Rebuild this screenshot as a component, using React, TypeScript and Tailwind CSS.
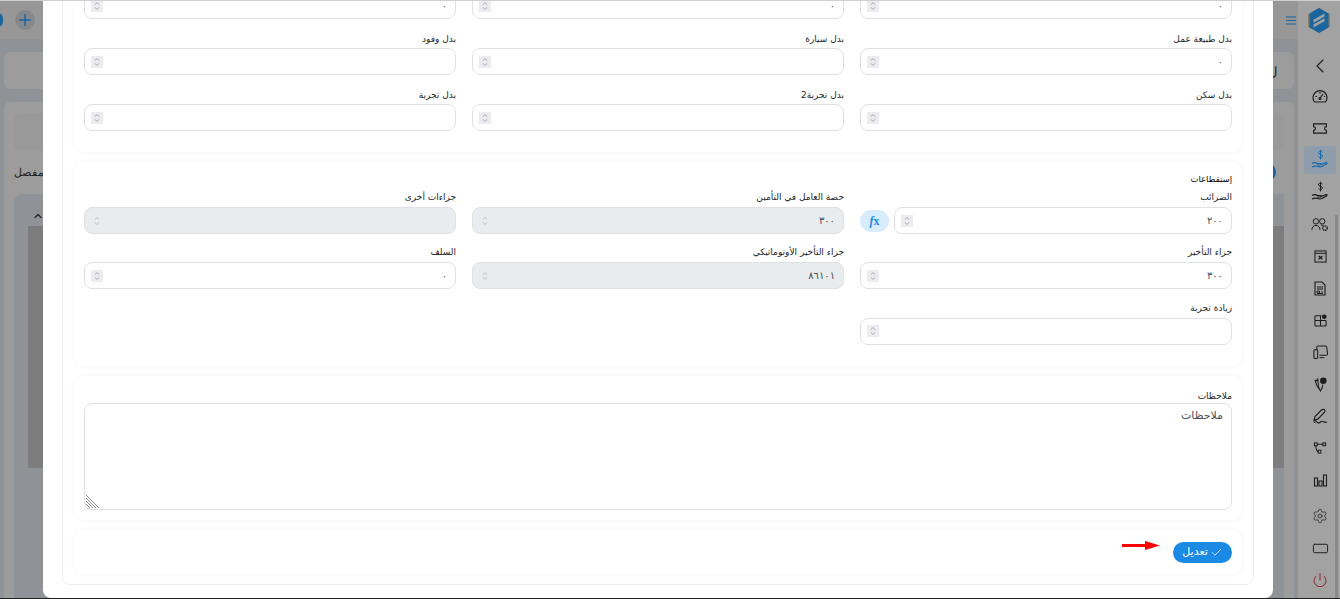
import { ChevronLeft, ChevronUp, Check, Plus, Power, Settings, RectangleHorizontal } from 'lucide-react'

type FieldProps = {
    label?: string
    value?: string
    disabled?: boolean
    formula?: boolean
}

const Arrows = () => (
    <svg viewBox="0 0 12 12" className="h-[12px] w-[12px]" fill="none" stroke="currentColor" strokeWidth="0.8">
        <path d="M3.800 4.600 6 2.600l2.200 2" />
        <path d="M3.800 7.400 6 9.400l2.200-2" />
    </svg>
)

const NumberBox = ({ value, disabled }: { value?: string; disabled?: boolean }) => (
    <div
        className={`flex h-[27px] flex-1 items-center justify-between rounded-[8px] border border-[#dee2e6] pr-[8px] pl-[6px] text-[10px] text-[#495057] ${disabled ? 'bg-[#e9ecef]' : 'bg-white'}`}
    >
        <span>{value}</span>
        <div className={disabled ? 'text-[#adb5bd]' : 'bg-[#ebebf0] text-[#9a9aa0]'}>
            <Arrows />
        </div>
    </div>
)

const Field = ({ label, value, disabled, formula }: FieldProps) => (
    <div className="flex flex-col">
        {label && <label className="mb-[2px] h-[13px] text-[9px] leading-[13px] text-[#212529]">{label}</label>}
        <div className="flex items-center gap-[5px]">
            <NumberBox value={value} disabled={disabled} />
            {formula && (
                <button
                    dir="ltr"
                    className="flex h-[22px] w-[29px] items-center justify-center rounded-full bg-[#d6ebfc] font-['Liberation_Serif',serif] text-[12px] font-bold text-[#1a8ae5]"
                >
                    <i>f</i>x
                </button>
            )}
        </div>
    </div>
)

const Card = ({ children, className }: { children: React.ReactNode; className?: string }) => (
    <div className={`rounded-[10px] bg-white shadow-[0_0_6px_rgba(0,0,0,0.04)] ${className ?? ''}`}>{children}</div>
)

const Dollar = ({ active }: { active?: boolean }) => (
    <svg
        viewBox="0 0 20 22"
        className={`h-[22px] w-[20px] ${active ? 'text-[#1b6aa8]' : 'text-[#1c1c1c]'}`}
        fill="none"
        stroke="currentColor"
        strokeWidth="1"
    >
        <path d="M12.500 3.200c-.5-.8-1.300-1.100-2-1.100-1.200 0-2 .6-2 1.600 0 2.200 4 1.200 4 3.300 0 1-.9 1.600-2 1.600-.8 0-1.600-.3-2-1M10.500.8v9.600" />
        <path d="M2 14.500c2-1.300 3.500-1.300 5.500 0h3c1 0 1 1.500 0 1.500H7" strokeWidth="1.200" />
        <path d="m11 15.500 5-1.800c1.200-.2 1.500.6.500 1.200L12 17.500c-1.500.6-3 .6-4.500 0-1.500-.6-3.500-.4-5.500.5" strokeWidth="1.200" />
    </svg>
)

const SideIcon = ({ children, active }: { children: React.ReactNode; active?: boolean }) => (
    <div
        className={`flex h-[28px] w-[32px] items-center justify-center rounded-[3px] text-[#1c1c1c] ${active ? 'bg-[#8f9cac]' : ''}`}
    >
        {children}
    </div>
)

const Sidebar = () => (
    <aside className="relative flex w-[42px] shrink-0 flex-col items-center bg-[#a2a2a2]">
        <div className="absolute top-[214px] right-[2px] bottom-0 w-[3px] bg-[#8a8a8a]" />
        <div className="flex h-[38px] w-full items-center justify-center">
            <svg viewBox="0 0 22 25" className="h-[25px] w-[22px]">
                <path d="M11 0 22 6.200v12.600L11 25 0 18.800V6.200z" fill="#8f7a60" />
                <path d="M11 0 20.500 5.500v14L11 25 1.500 19.500v-14z" fill="#1b659f" />
                <path d="M16.500 5.500 5.500 11.800v3l11-6.300zM5.500 16.500l11-6.300v3l-11 6.300z" fill="#a2a2a2" />
            </svg>
        </div>
        <div className="flex h-[52px] items-center justify-center pt-[2px] pl-[1px]">
            <ChevronLeft size={24} strokeWidth={1.100} className="text-[#1c1c1c]" />
        </div>
        <div className="-mt-[9px] flex flex-col items-center gap-[4px] pl-[2px]">
            <SideIcon>
                <svg viewBox="0 0 16 14" className="h-[14px] w-[16px]" fill="none" stroke="currentColor" strokeWidth="1.200">
                    <path d="M2.500 13a7 7 0 1 1 11 0z" />
                    <path d="m8 9 3-4M3.500 7.500h1.500M8 3v1.500M12 7.500h1" />
                    <circle cx="8" cy="9.500" r="1" />
                </svg>
            </SideIcon>
            <SideIcon>
                <svg viewBox="0 0 16 12" className="h-[11px] w-[16px]" fill="none" stroke="currentColor" strokeWidth="1.200">
                    <path d="M1 1h14v3a2 2 0 0 0 0 4v3H1V8a2 2 0 0 0 0-4z" />
                </svg>
            </SideIcon>
            <SideIcon active>
                <Dollar active />
            </SideIcon>
            <SideIcon>
                <Dollar />
            </SideIcon>
            <SideIcon>
                <svg viewBox="0 0 20 16" className="h-[15px] w-[18px]" fill="none" stroke="currentColor" strokeWidth="1.100">
                    <circle cx="5.500" cy="4.500" r="3" />
                    <circle cx="12.500" cy="4.500" r="3" />
                    <path d="M1 14c0-3 2-5 4.500-5S10 11 10 14M11 8.500c1 0 2 .2 2.500.8" />
                    <circle cx="15.500" cy="12" r="2.500" strokeDasharray="1.500 .6" strokeWidth="1.500" />
                </svg>
            </SideIcon>
            <SideIcon>
                <svg viewBox="0 0 14 14" className="h-[13px] w-[13px]" fill="none" stroke="currentColor" strokeWidth="1.100">
                    <rect x="1" y="1" width="12" height="12" />
                    <path d="M1 3.500h12" />
                    <path d="m5 6.500 4 3.500M9 6.500 5 10" strokeWidth="1.400" />
                </svg>
            </SideIcon>
            <SideIcon>
                <svg viewBox="0 0 12 15" className="h-[15px] w-[12px]" fill="none" stroke="currentColor" strokeWidth="1.100">
                    <path d="M1 1h7l3 3v10H1z" />
                    <path d="M3 6h6M3 8h6" />
                    <path d="M3 10h2.500v2H3zM7 11h2M3 12.500h6" strokeWidth="0.900" />
                </svg>
            </SideIcon>
            <SideIcon>
                <svg viewBox="0 0 14 14" className="h-[13px] w-[13px]" fill="none" stroke="currentColor" strokeWidth="1.100">
                    <path d="M8 2H2a1 1 0 0 0-1 1v9.500a.500.500 0 0 0 .500.500H12a1 1 0 0 0 1-1V7M7 2v11M1 7h12" />
                    <circle cx="11" cy="3" r="2.500" fill="currentColor" stroke="none" />
                </svg>
            </SideIcon>
            <SideIcon>
                <svg viewBox="0 0 16 16" className="h-[15px] w-[15px]" fill="none" stroke="currentColor" strokeWidth="1.100">
                    <path d="M4 5V2.500A1.500 1.500 0 0 1 5.500 1h7.500c1 0 1.500.5 1.700 1.500L15.500 9c.2 1-.5 2-1.500 2H7" />
                    <rect x="1" y="5" width="4" height="9.500" rx="1" />
                    <path d="M7 13.500h5" />
                </svg>
            </SideIcon>
            <SideIcon>
                <svg viewBox="0 0 14 16" className="h-[15px] w-[13px]" fill="none" stroke="currentColor" strokeWidth="1.100">
                    <path d="M1 3l2 1 1-2 1 9 2 4 2-4 .6-3M1 3l2 6 4 6" />
                    <circle cx="10" cy="4" r="3.500" fill="currentColor" stroke="none" />
                </svg>
            </SideIcon>
            <SideIcon>
                <svg viewBox="0 0 16 16" className="h-[16px] w-[16px]" fill="none" stroke="currentColor" strokeWidth="1.100">
                    <path d="M2 12.500 3 8.500 9.500 2c1-1 3.500-1 3.500 1 0 .6-.3 1-.7 1.500L6 11z" />
                    <path d="M2 12.500 6 11M2 14.500c1.500-1 2.500-1 3.500 0s2 .5 3-.5 2-1 3-.2 2 .7 3.500.2" />
                </svg>
            </SideIcon>
            <SideIcon>
                <svg viewBox="0 0 14 13" className="h-[12px] w-[14px]" fill="none" stroke="currentColor" strokeWidth="1.100">
                    <rect x="1" y="1" width="3" height="3" />
                    <rect x="10" y="1" width="3" height="3" />
                    <rect x="5" y="9" width="3" height="3" />
                    <path d="M4 2.500h6M2.500 4c0 3 1 5.500 2.500 6.500" />
                </svg>
            </SideIcon>
            <SideIcon>
                <svg viewBox="0 0 14 13" className="h-[13px] w-[15px]" fill="none" stroke="currentColor" strokeWidth="1.100">
                    <rect x="1" y="4" width="3" height="8" />
                    <rect x="5.500" y="7" width="3" height="5" />
                    <rect x="10" y="1" width="3" height="11" />
                </svg>
            </SideIcon>
            <div className="mt-[4px]">
                <SideIcon>
                    <Settings size={16} strokeWidth={1.100} />
                </SideIcon>
            </div>
            <SideIcon>
                <RectangleHorizontal size={17} strokeWidth={1.400} />
            </SideIcon>
            <SideIcon>
                <Power size={16} strokeWidth={1.400} className="text-[#8c2236]" />
            </SideIcon>
        </div>
    </aside>
)

// the dimmed page that sits under the modal
const BackPage = () => (
    <div className="flex min-w-0 flex-1 flex-col bg-[#8f9296]">
        <div className="flex h-[38px] shrink-0 items-center justify-between bg-[#979797] pr-[2px]">
            <div className="flex items-center gap-[12px]">
                <div className="-ml-[8px] h-[14px] w-[11px] rounded-full bg-[#1b659f]" />
                <div className="flex h-[20px] w-[20px] items-center justify-center rounded-full bg-[#85898e]">
                    <Plus size={18} strokeWidth={2} className="text-[#1b659f]" />
                </div>
            </div>
            <svg viewBox="0 0 10 9" className="h-[9px] w-[10px]" fill="none" stroke="#1b659f" strokeWidth="1">
                <path d="M0 1h10M0 4.500h10M0 8h10" />
            </svg>
        </div>
        <div className="mx-[4px] mt-[13px] flex h-[37px] shrink-0 items-center justify-end rounded-[6px] bg-[#9c9c9c] pt-[2px] pr-[17px] pl-[4px] text-[13px] text-[#222]">
            ل
        </div>
        <div className="mx-[4px] mt-[13px] flex flex-1 flex-col rounded-t-[6px] bg-[#9c9c9c] px-[10px] pt-[11px]">
            <div className="h-[37px] rounded-[6px] bg-[#999999]" />
            <div className="mt-[12px] flex h-[20px] items-center justify-between">
                <span dir="rtl" className="text-[11px] text-[#222]">
                    مفصل
                </span>
                <span className="mr-[8px] h-[20px] w-[24px] rounded-full bg-[#1b659f]" />
            </div>
            <div className="mt-[12px] flex-1 rounded-tl-[8px] bg-[#8f9296] pt-[16px] pl-[14px]">
                <ChevronUp size={12} strokeWidth={2.500} className="ml-[4px] text-[#222]" />
                <div className="mt-[4px] h-[242px] bg-[#7d7d7d]" />
            </div>
        </div>
    </div>
)

const Arrow = () => (
    <svg viewBox="0 0 38 9" className="h-[9px] w-[38px]">
        <path d="M0 3h23V0l15 4.500L23 9V6H0z" fill="#f00" />
    </svg>
)

const Modal = () => (
    <div
        dir="rtl"
        className="absolute top-0 bottom-0 left-[43px] flex w-[1230px] flex-col justify-end overflow-hidden rounded-b-[8px] bg-white px-[19px] pb-[13px] font-['DejaVu_Sans',sans-serif]"
    >
        <div className="flex shrink-0 flex-col gap-[10px] rounded-[8px] border border-[#eceef0] px-[11px] pt-[10px] pb-[10px]">
            <Card className="px-[10px] pt-[10px] pb-[21px]">
                <div className="grid grid-cols-3 gap-x-[16px] gap-y-[14px]">
                    <Field value="٠" />
                    <Field value="٠" />
                    <Field value="٠" />
                    <Field label="بدل طبيعة عمل" value="٠" />
                    <Field label="بدل سيارة" />
                    <Field label="بدل وفود" />
                    <Field label="بدل سكن" />
                    <Field label="بدل تجربة2" />
                    <Field label="بدل تجربة" />
                </div>
            </Card>
            <Card className="h-[204px] px-[10px] pt-[10px]">
                <h3 className="h-[14px] text-[8.500px] leading-[14px] text-black">إستقطاعات</h3>
                <div className="mt-[5px] grid grid-cols-3 gap-x-[16px] gap-y-[12.400px] [&_label]:mb-[3px]">
                    <Field label="الضرائب" value="٢٠٠" formula />
                    <Field label="حصة العامل في التأمين" value="٣٠٠" disabled />
                    <Field label="جزاءات أخرى" disabled />
                    <Field label="جزاء التأخير" value="٣٠٠" />
                    <Field label="جزاء التأخير الأوتوماتيكي" value="٨٦١٠١" disabled />
                    <Field label="السلف" value="٠" />
                    <Field label="زيادة تجربة" />
                </div>
            </Card>
            <Card className="h-[144px] px-[10px] pt-[14px]">
                <label className="block h-[13px] text-[9px] leading-[13px] text-[#212529]">ملاحظات</label>
                <div className="relative">
                    <textarea
                        readOnly
                        placeholder="ملاحظات"
                        className="block h-[107px] w-full resize-none rounded-[8px] border border-[#dee2e6] px-[8px] py-[4px] text-[11px] text-[#495057] placeholder:text-[#495057]"
                    />
                    <svg
                        viewBox="0 0 15 15"
                        className="absolute bottom-[1px] left-[1px] h-[15px] w-[15px]"
                        fill="none"
                        stroke="#8a8a8a"
                        strokeWidth="1"
                    >
                        <path d="M1 1l13 13M1 4l10 10M1 7l7 7M1 10l4 4" />
                    </svg>
                </div>
            </Card>
            <Card className="flex h-[44px] items-center gap-[13px] px-[10px] pt-[1px]">
                <button className="flex h-[21px] w-[59px] items-center justify-center gap-[2px] rounded-full bg-[#1a8ae5] text-[11px] text-white">
                    <Check size={13} strokeWidth={1.400} />
                    تعديل
                </button>
                <div className="mb-[15px]">
                    <Arrow />
                </div>
            </Card>
        </div>
    </div>
)

export default function App() {
    return (
        <div className="relative flex h-[599px] w-[1340px] overflow-hidden border-t border-b border-t-[#cfcfcf] border-b-[#222]">
            <BackPage />
            <Sidebar />
            <Modal />
        </div>
    )
}
